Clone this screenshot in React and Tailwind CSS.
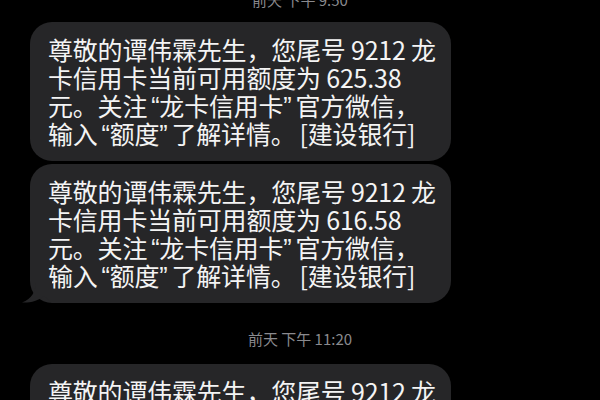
import React from "react";

const font = { fontFamily: '"Noto Sans CJK SC", "Noto Sans", sans-serif' };

function LQ() {
  return <span className="inline-block align-top h-[28px] leading-[30px] font-['Liberation_Sans'] ml-[4px]">“</span>;
}
function RQ() {
  return <span className="inline-block align-top h-[28px] leading-[30px] font-['Liberation_Sans'] mr-[4px]">”</span>;
}

function Bubble({ amount, tail }) {
  return (
    <div className="relative w-[421px] ml-[30px] rounded-[22px] bg-[#262628] pl-[18px] pr-[10px] pt-[13px] pb-[14px] text-[25px] leading-[28px] text-[#f4f4f4] tracking-[-0.2px]">
      <span className="block h-[28px] whitespace-nowrap">尊敬的谭伟霖先生，您尾号 9212 龙</span>
      <span className="block h-[28px] whitespace-nowrap">卡信用卡当前可用额度为 {amount}</span>
      <span className="block h-[28px] whitespace-nowrap">
        元。关注<LQ />龙卡信用卡<RQ />官方微信，
      </span>
      <span className="block h-[28px] whitespace-nowrap">
        输入<LQ />额度<RQ />了解详情。<span className="ml-[4px]">[</span>建设银行<span className="mr-[2px]">]</span>
      </span>
      {tail && (
        <svg className="absolute left-[-8px] bottom-0" width="30" height="22" viewBox="0 0 30 22">
          <path d="M14 0 C14 10 10 18 0 21.5 C8 22 16 20 22 15 L30 22 L30 0 Z" fill="#262628" />
        </svg>
      )}
    </div>
  );
}

export default function App() {
  return (
    <div className="w-[600px] h-[400px] overflow-hidden bg-black flex flex-col" style={font}>
      <div className="-mt-[10px] h-[20px] flex justify-center items-center text-[15px] text-[#8a8a8e]">前天 下午 9:50</div>
      <div className="mt-[12px]">
        <Bubble amount="625.38" />
      </div>
      <div className="mt-[3px]">
        <Bubble amount="616.58" tail />
      </div>
      <div className="mt-[26px] flex justify-center text-[15px] leading-[20px] text-[#8a8a8e]">前天 下午 11:20</div>
      <div className="mt-[15px]">
        <Bubble amount="625.38" />
      </div>
    </div>
  );
}
